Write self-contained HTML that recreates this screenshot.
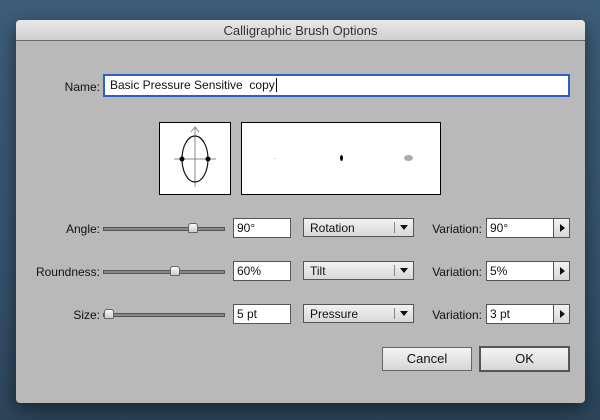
<!DOCTYPE html>
<html><head><style>
*{margin:0;padding:0;box-sizing:border-box}
body{width:600px;height:420px;overflow:hidden;background:linear-gradient(#3e5d78,#34506a 70%,#2c4559);font-family:"Liberation Sans",sans-serif;font-size:12px;color:#111;position:relative}
.dlg{position:absolute;left:16px;top:20px;width:569px;height:383px;background:#b9b9b9;border-radius:4px;box-shadow:0 6px 18px rgba(0,0,0,.5);overflow:hidden}
.title{height:21px;background:linear-gradient(#e8e8e8,#d0d0d0);border-bottom:1px solid #6c6c6c;text-align:center;line-height:21px;font-size:13px;color:#333}
.a{position:absolute}
.lbl{position:absolute;text-align:right;font-size:12px;line-height:14px}
.in{position:absolute;background:#fff;border:1px solid #555;height:20px;line-height:18px;padding-left:3px;font-size:12px}
.dd{position:absolute;background:linear-gradient(#f2f2f2,#d8d8d8);border:1px solid #555;height:19px;line-height:18px;padding-left:6px;font-size:12px}
.dd i{position:absolute;right:18px;top:3px;height:11px;border-left:1px solid #888}
.dd b{position:absolute;right:5px;top:6px;border-left:4px solid transparent;border-right:4px solid transparent;border-top:5px solid #111}
.ar{position:absolute;background:linear-gradient(#f2f2f2,#d8d8d8);border:1px solid #555;width:17px;height:20px}
.ar b{position:absolute;left:6px;top:5px;border-top:4px solid transparent;border-bottom:4px solid transparent;border-left:5px solid #111}
.sl{position:absolute;height:4px;background:#888;border:1px solid #555;width:122px}
.th{position:absolute;width:10px;height:10px;background:linear-gradient(#fafafa,#ccc);border:1px solid #666;border-radius:3px 3px 1px 1px}
.btn{position:absolute;background:linear-gradient(#f4f4f4,#d6d6d6);border:1px solid #666;text-align:center;font-size:13px}
</style></head><body>
<div class="dlg">
<div class="title">Calligraphic Brush Options</div>
</div>
<div class="lbl" style="left:50px;top:80px;width:50px">Name:</div>
<div class="in" style="left:103px;top:74px;width:467px;height:23px;border:2px solid #2a5fc8;line-height:19px;padding-left:5px">Basic Pressure Sensitive&nbsp; copy<span style="border-left:1px solid #000;margin-left:1px"></span></div>

<div class="a" style="left:159px;top:122px;width:72px;height:73px;background:#fff;border:1px solid #000">
<svg width="70" height="71" style="position:absolute;left:0;top:0">
<line x1="35" y1="4" x2="35" y2="64" stroke="#888"/>
<polyline points="31,9 35,4 39,9" fill="none" stroke="#888"/>
<line x1="14" y1="36" x2="56" y2="36" stroke="#888"/>
<ellipse cx="35" cy="36" rx="13" ry="23" fill="none" stroke="#111" stroke-width="1.2"/>
<circle cx="22" cy="36" r="2.5" fill="#000"/><circle cx="48" cy="36" r="2.5" fill="#000"/>
</svg></div>
<div class="a" style="left:241px;top:122px;width:200px;height:73px;background:#fff;border:1px solid #000">
<div class="a" style="left:32px;top:35px;width:2px;height:1px;background:#ccc"></div>
<div class="a" style="left:98px;top:32px;width:3px;height:6px;background:#000;border-radius:50%"></div>
<div class="a" style="left:162px;top:32px;width:9px;height:6px;background:#aaa;border-radius:50%"></div>
</div>

<div class="lbl" style="left:30px;top:222px;width:70px">Angle:</div>
<div class="sl" style="left:103px;top:227px"></div><div class="th" style="left:188px;top:223px"></div>
<div class="in" style="left:233px;top:218px;width:58px">90°</div>
<div class="dd" style="left:303px;top:218px;width:111px">Rotation<i></i><b></b></div>
<div class="lbl" style="left:420px;top:222px;width:62px">Variation:</div>
<div class="in" style="left:486px;top:218px;width:68px">90°</div>
<div class="ar" style="left:553px;top:218px"><b></b></div>

<div class="lbl" style="left:20px;top:265px;width:80px">Roundness:</div>
<div class="sl" style="left:103px;top:270px"></div><div class="th" style="left:170px;top:266px"></div>
<div class="in" style="left:233px;top:261px;width:58px">60%</div>
<div class="dd" style="left:303px;top:261px;width:111px">Tilt<i></i><b></b></div>
<div class="lbl" style="left:420px;top:265px;width:62px">Variation:</div>
<div class="in" style="left:486px;top:261px;width:68px">5%</div>
<div class="ar" style="left:553px;top:261px"><b></b></div>

<div class="lbl" style="left:30px;top:308px;width:70px">Size:</div>
<div class="sl" style="left:103px;top:313px"></div><div class="th" style="left:104px;top:309px"></div>
<div class="in" style="left:233px;top:304px;width:58px">5 pt</div>
<div class="dd" style="left:303px;top:304px;width:111px">Pressure<i></i><b></b></div>
<div class="lbl" style="left:420px;top:308px;width:62px">Variation:</div>
<div class="in" style="left:486px;top:304px;width:68px">3 pt</div>
<div class="ar" style="left:553px;top:304px"><b></b></div>

<div class="btn" style="left:382px;top:347px;width:90px;height:24px;line-height:22px">Cancel</div>
<div class="btn" style="left:479px;top:346px;width:91px;height:26px;line-height:22px;border:2px solid #555">OK</div>
</body></html>
